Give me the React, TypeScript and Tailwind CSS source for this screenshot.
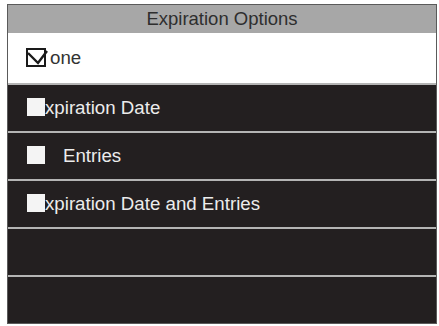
import React from "react";

const font = { fontFamily: '"Liberation Sans", Arial, sans-serif' };

const Box = () => <div className="w-[18px] h-[18px] bg-[#f4f4f4] shrink-0 -mt-[3px]" />;

const CheckedBox = () => (
  <div className="relative w-[20px] h-[19px] border-2 border-[#1a1a1a] shrink-0 -mt-[2px]">
    <svg
      className="absolute -left-[2px] -top-[2px]"
      width="26"
      height="19"
      viewBox="0 0 26 19"
      fill="none"
    >
      <path
        d="M2 5 L12 15 L21 3"
        stroke="#1a1a1a"
        strokeWidth="2.4"
        strokeLinejoin="miter"
      />
    </svg>
  </div>
);

const DarkRow: React.FC<{ children?: React.ReactNode }> = ({ children }) => (
  <div className="h-[48px] border-t-2 border-[#b4b4b4] bg-[#231f20] flex items-center pl-[19px] text-[18.7px] text-[#ececec]">
    {children}
  </div>
);

export default function App() {
  return (
    <div className="w-[439px] h-[326px] bg-white pt-[4px] pl-[7px]" style={font}>
      <div className="w-[430px] h-[320px] border border-[#5a5a5a] flex flex-col">
        <div className="h-[28px] bg-[#a7a7a7] flex items-center justify-center text-[18.5px] text-[#2e2e2e]">
          Expiration Options
        </div>
        <div className="h-[50px] bg-white flex items-center pl-[18px] text-[18.7px] text-[#333]">
          <CheckedBox />
          <span className="ml-[4px]">one</span>
        </div>
        <DarkRow>
          <Box />
          <span>xpiration Date</span>
        </DarkRow>
        <DarkRow>
          <Box />
          <span className="ml-[18px]">Entries</span>
        </DarkRow>
        <DarkRow>
          <Box />
          <span>xpiration Date and Entries</span>
        </DarkRow>
        <DarkRow />
        <DarkRow />
      </div>
    </div>
  );
}
